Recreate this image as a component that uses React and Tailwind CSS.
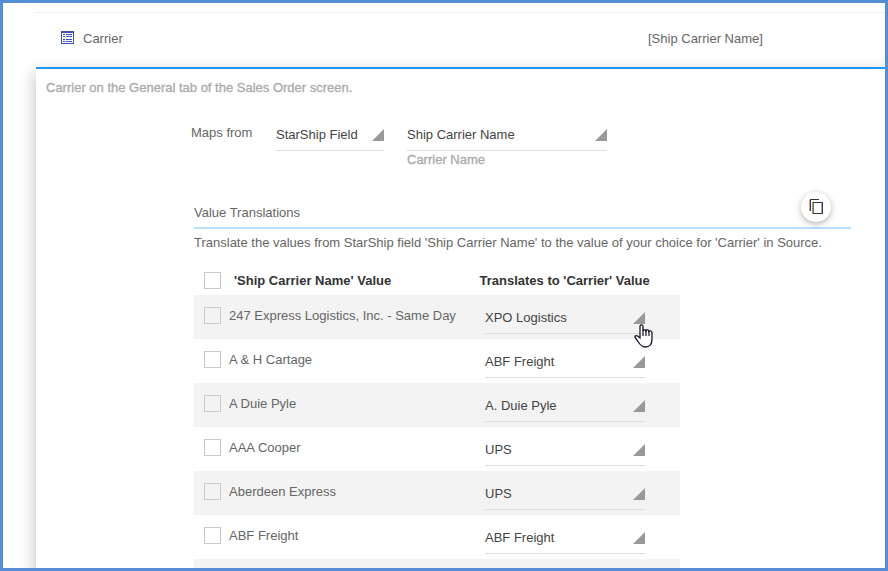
const rows = [
  ["247 Express Logistics, Inc. - Same Day", "XPO Logistics"],
  ["A & H Cartage", "ABF Freight"],
  ["A Duie Pyle", "A. Duie Pyle"],
  ["AAA Cooper", "UPS"],
  ["Aberdeen Express", "UPS"],
  ["ABF Freight", "ABF Freight"],
];

function Corner() {
  return (
    <svg className="h-3 w-3 shrink-0" viewBox="0 0 12 12">
      <path d="M12 0V12H0Z" fill="#999" />
    </svg>
  );
}

function Select({ value, className }) {
  return (
    <div className={`flex h-[26px] items-start justify-between border-b border-[#dedede] text-[#444] ${className}`}>
      <span className="leading-5">{value}</span>
      <span className="pt-1"><Corner /></span>
    </div>
  );
}

function Checkbox() {
  return <span className="h-[17px] w-[17px] shrink-0 border border-[#c9c9c9]" />;
}

function ListIcon() {
  return (
    <svg className="mb-[3px] h-[13px] w-[13px]" viewBox="0 0 13 13" shapeRendering="crispEdges">
      <path d="M0 0H13V13H0Z" fill="#3f51b5" />
      <path d="M1 2H12V12H1Z" fill="#fff" />
      <path d="M2 3.5H4M5 3.5H11M2 5.5H4M5 5.5H11M2 8.5H4M5 8.5H11M2 10.5H4M5 10.5H11" stroke="#3f51b5" />
    </svg>
  );
}

function CopyIcon() {
  return (
    <svg className="h-4 w-4" viewBox="0 0 16 16" fill="none" shapeRendering="crispEdges">
      <path d="M1.5 12V1" stroke="#e0a070" />
      <path d="M2.5 12V1" stroke="#283593" />
      <path d="M2 .5H11" stroke="#333" />
      <path d="M4 3.5H14M4 14.5H14" stroke="#333" />
      <path d="M4.5 3V15" stroke="#d88a35" />
      <path d="M5.5 4V14" stroke="#3b7fae" />
      <path d="M13.5 4V14" stroke="#e0a070" />
      <path d="M14.5 3V15" stroke="#283593" />
    </svg>
  );
}

function HandCursor() {
  return (
    <svg className="absolute top-[17px] left-[149px] z-10 h-6 w-[19px]" viewBox="0 0 19 24">
      <path
        d="M6 14V2.5C6 .3 9 .3 9 2.5V7C10 5 12 5.2 12 6.8C13 5.2 15 5.8 15 7.4C16.2 6.2 18 7 18 8.8V15C18 20 15.5 23 11.5 23C7.5 23 6 21 4 17.5L1.2 13.7C.3 12 2.3 11 3.5 12Z"
        fill="#fff" stroke="#15152a" strokeWidth="1.3"
      />
      <path d="M9 6V12M12 6V12M15 7V12" stroke="#15152a" strokeWidth="1.2" />
    </svg>
  );
}

export default function App() {
  return (
    <div className="h-[571px] w-[888px] overflow-hidden border-[3px] border-[#558ed5] bg-white pl-[33px] font-['Liberation_Sans',Arial,sans-serif] text-[13px] text-[#666]">
      <div className="mt-[9px] flex h-[55px] items-center border-t border-[#eee] pb-[2px] pl-[25px]">
        <ListIcon />
        <span className="ml-[9px] w-[565px]">Carrier</span>
        <span>[Ship Carrier Name]</span>
      </div>
      <main className="h-[520px] w-[870px] border-t-2 border-[#2196f3] bg-white pt-[9px] shadow-[0_6px_16px_rgba(0,0,0,0.27)]">
        <p className="pl-[10px] leading-5 text-[#aaa] [-webkit-text-stroke:0.3px_#aaa]">Carrier on the General tab of the Sales Order screen.</p>
        <div className="mt-[25px] flex h-[76px] pl-[155px]">
          <span className="w-[85px] leading-5">Maps from</span>
          <Select value="StarShip Field" className="mt-[2px] w-[108px]" />
          <div className="ml-[23px] pt-[2px]">
            <Select value="Ship Carrier Name" className="w-[200px]" />
            <p className="leading-[18px] text-[#aaa] [-webkit-text-stroke:0.3px_#aaa]">Carrier Name</p>
          </div>
        </div>
        <section className="pl-[158px]">
          <div className="relative flex h-[30px] w-[657px] items-start border-b-2 border-[#bbdefb] pt-1">
            <span className="leading-5">Value Translations</span>
            <button className="absolute -top-[7px] right-[20px] flex h-[30px] w-[30px] items-center justify-center rounded-full bg-white shadow-[0_2px_6px_rgba(0,0,0,0.3)]">
              <CopyIcon />
            </button>
          </div>
          <p className="mt-1 leading-5 whitespace-nowrap">Translate the values from StarShip field 'Ship Carrier Name' to the value of your choice for 'Carrier' in Source.</p>
          <div className="mt-3 w-[486px]">
            <div className="flex h-[30px] items-center pl-[10px] font-bold text-[#333]">
              <Checkbox />
              <span className="ml-[13px] w-[245.5px] pt-px">'Ship Carrier Name' Value</span>
              <span className="pt-px whitespace-nowrap">Translates to 'Carrier' Value</span>
            </div>
            {rows.map(([source, target], i) => (
              <div key={source} className="flex h-11 pt-3 pl-[10px] odd:bg-white even:bg-[#f3f3f3]">
                <Checkbox />
                <span className="-mt-px ml-2 w-[256px] leading-5">{source}</span>
                <div className="relative h-[27px] pt-px">
                  <Select value={target} className="w-[160px]" />
                  {i === 0 && <HandCursor />}
                </div>
              </div>
            ))}
            <div className="h-11 bg-[#f3f3f3]" />
          </div>
        </section>
      </main>
    </div>
  );
}
